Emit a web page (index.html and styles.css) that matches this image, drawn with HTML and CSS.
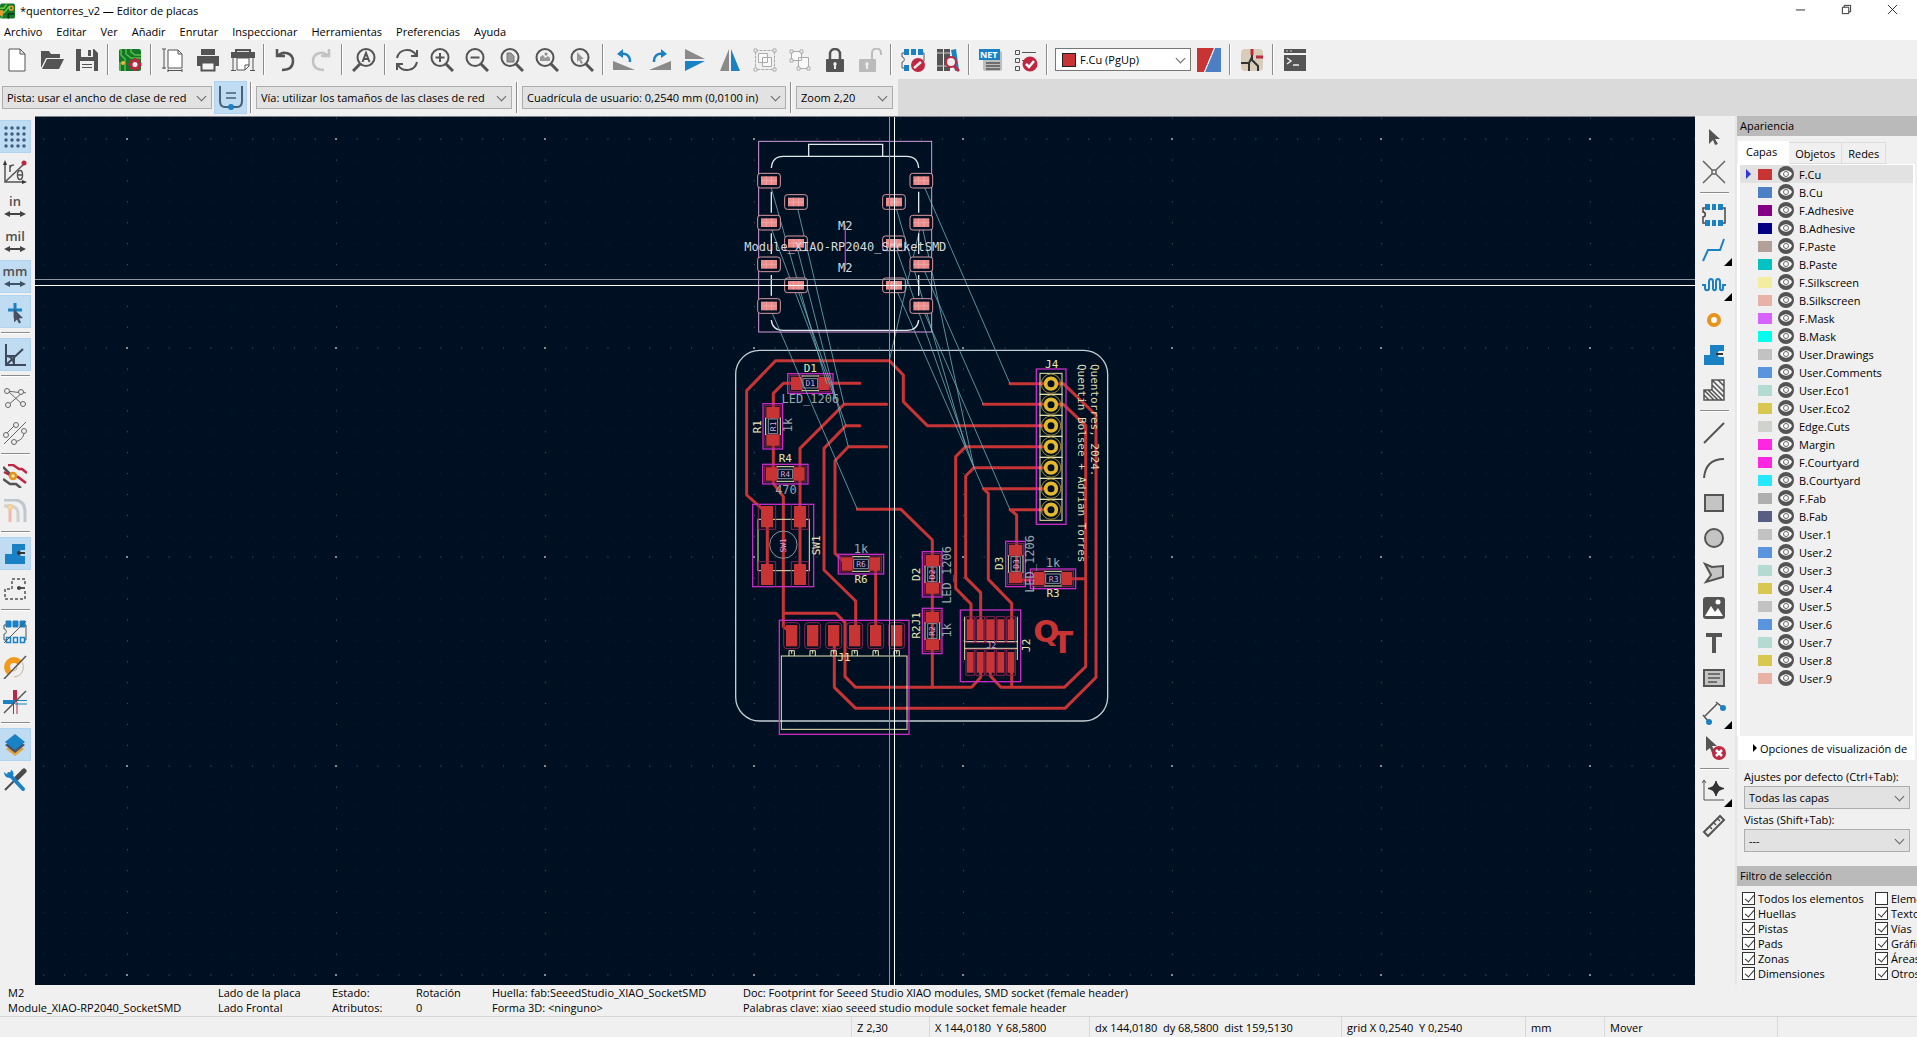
FILE: index.html
```
<!DOCTYPE html>
<html lang="es">
<head>
  <meta charset="UTF-8">
  <title>*quentorres_v2 — Editor de placas</title>
  <link rel="stylesheet" href="styles.css">
</head>
<body>

  <header class="titlebar">
    <svg class="app-icon" viewBox="0 0 16 16"><rect width="16" height="16" rx="2" fill="#17772a"/><path d="M0 5h4l3-4M0 9h5l5-6M2 15V11l3-2" stroke="#6fce3c" stroke-width="1.5" fill="none"/><circle cx="12" cy="5" r="2" fill="none" stroke="#f2a32c" stroke-width="1.5"/><path d="M9 16v-5h6" stroke="#0b3c16" stroke-width="2" fill="none"/><path d="M0 7h3v6H0z" fill="#e79a2c"/></svg>
    <span class="title">*quentorres_v2 — Editor de placas</span>
    <button class="win" aria-label="Minimizar"><svg viewBox="0 0 12 12"><path d="M1 6.500h10"/></svg></button>
    <button class="win" aria-label="Restaurar"><svg viewBox="0 0 12 12"><path d="M1.500 3.500h7v7h-7zM3.500 3.500v-2h7v7h-2"/></svg></button>
    <button class="win" aria-label="Cerrar"><svg viewBox="0 0 12 12"><path d="M1 1l10 10M11 1L1 11"/></svg></button>
  </header>

  <nav class="menubar">
    <button>Archivo</button><button>Editar</button><button>Ver</button><button>Añadir</button><button>Enrutar</button><button>Inspeccionar</button><button>Herramientas</button><button>Preferencias</button><button>Ayuda</button>
  </nav>

  <div class="toolbar">
    <button class="tool" aria-label="Nuevo"><svg viewBox="0 0 24 24"><path d="M4 1h11l5 5v17H4zM15 1v5h5" fill="#fff" stroke="#545454"/></svg></button>
    <button class="tool" aria-label="Abrir"><svg viewBox="0 0 24 24" fill="#545454"><path d="M1 20V3h8l2 3h9v4H6z"/><path d="M7 11h17l-5 10H2z"/></svg></button>
    <button class="tool" aria-label="Guardar"><svg viewBox="0 0 24 24"><path d="M1 1h18l4 4v18H1z" fill="#545454"/><path d="M6 1h12v8H6zM5 13h14v10H5z" fill="#f0f0f0"/><path d="M13 2h3v6h-3zM7 16h10v1H7zM7 19h10v1H7z" fill="#545454"/></svg></button>
    <span class="sep"></span>
    <button class="tool" aria-label="Ajustes de placa"><svg viewBox="0 0 24 24"><rect x="1" y="1" width="22" height="22" rx="2" fill="#14762a"/><path d="M3 1v6l4 4v12M8 1v5l5 4h10M13 1v3l4 3h6M2 14v9" fill="none" stroke="#56bf41" stroke-width="1.500"/><circle cx="5" cy="15" r="2" fill="#f0b23b"/><g stroke="#bf2641" stroke-width="3"><path d="M17 10v13M10.500 16.500h13M12.500 12l9 9M21.500 12l-9 9"/></g><circle cx="17" cy="16.500" r="4.500" fill="#bf2641"/><circle cx="17" cy="16.500" r="2.500" fill="#eee"/></svg></button>
    <span class="sep"></span>
    <button class="tool" aria-label="Ajustes de página"><svg viewBox="0 0 24 24" fill="none" stroke="#545454"><path d="M7 2h10l4 4v14H7zM17 2v4h4" fill="#fff"/><path d="M3 1v20M1 1h4M1 20h4M7 22.500h14M7 21v3M21 21v3"/></svg></button>
    <button class="tool" aria-label="Imprimir"><svg viewBox="0 0 24 24"><path d="M5 1h14v6H5z" fill="#545454"/><path d="M1 8h22v10h-4v-4H5v4H1z" fill="#545454"/><path d="M5.500 14.500h13v8h-13z" fill="#f5f5f5" stroke="#545454" stroke-width="2"/></svg></button>
    <button class="tool" aria-label="Trazar"><svg viewBox="0 0 24 24"><path d="M4 1h16v3h4v6H0V4h4z" fill="#545454"/><path d="M6 10h12v8l-4 4H6z" fill="#fff" stroke="#545454"/><path d="M18 17h-4v5M2 10v13M22 10v13M0 22.500h5M19 22.500h5" fill="none" stroke="#545454"/><path d="M6 3h12v1H6z" fill="#ddd"/></svg></button>
    <span class="sep"></span>
    <button class="tool" aria-label="Deshacer"><svg viewBox="0 0 24 24" fill="none" stroke="#545454" stroke-width="2.500"><path d="M3 1v7h8M4 8c5-6 15-3 15 5 0 6-4 9-11 9"/></svg></button>
    <button class="tool" aria-label="Rehacer"><svg viewBox="0 0 24 24" fill="none" stroke="#c3c3c3" stroke-width="2.500"><path d="M20 1v7h-8M19 8C14 2 4 5 4 13c0 6 4 9 11 9"/></svg></button>
    <span class="sep"></span>
    <button class="tool" aria-label="Buscar"><svg viewBox="0 0 24 24" fill="none" stroke="#545454" stroke-width="2"><circle cx="14" cy="9.500" r="8.500"/><path d="M8 16l-7 7" stroke-width="3"/><path d="M10.500 14l3.500-9 3.500 9M12 11h4"/></svg></button>
    <span class="sep"></span>
    <button class="tool" aria-label="Refrescar"><svg viewBox="0 0 24 24" fill="none" stroke="#545454" stroke-width="2"><path d="M2 10C4 1 16-1 21 7M22 14c-2 9-14 11-19 3"/><path d="M22 2v6h-6M2 22v-6h6"/></svg></button>
    <button class="tool" aria-label="Acercar"><svg viewBox="0 0 24 24" fill="none" stroke="#545454" stroke-width="2"><circle cx="10" cy="9.500" r="8.500"/><path d="M16 16l7 7" stroke-width="3"/><path d="M10 5v9M5.500 9.500h9"/></svg></button>
    <button class="tool" aria-label="Alejar"><svg viewBox="0 0 24 24" fill="none" stroke="#545454" stroke-width="2"><circle cx="10" cy="9.500" r="8.500"/><path d="M16 16l7 7" stroke-width="3"/><path d="M5.500 9.500h9"/></svg></button>
    <button class="tool" aria-label="Ajustar a página"><svg viewBox="0 0 24 24" fill="none" stroke="#545454" stroke-width="2"><circle cx="10" cy="9.500" r="8.500"/><path d="M16 16l7 7" stroke-width="3"/><path d="M7 5h4l3 3v6H7z" fill="#999" stroke="#777" stroke-width="1"/></svg></button>
    <button class="tool" aria-label="Ajustar a objetos"><svg viewBox="0 0 24 24" fill="none" stroke="#545454" stroke-width="2"><circle cx="10" cy="9.500" r="8.500"/><path d="M16 16l7 7" stroke-width="3"/><path d="M5 13V9l3-2 2 3 3-2 2 2v3z" fill="#999" stroke="none"/><circle cx="11" cy="6" r="1.500" fill="#888" stroke="none"/></svg></button>
    <button class="tool" aria-label="Ampliar selección"><svg viewBox="0 0 24 24" fill="none" stroke="#545454" stroke-width="2"><circle cx="10" cy="9.500" r="8.500"/><path d="M16 16l7 7" stroke-width="3"/><path d="M7 4l7 7h-3l2 4-2 1-2-4-2 2z" fill="#999" stroke="none"/></svg></button>
    <span class="sep"></span>
    <button class="tool" aria-label="Girar a la izquierda"><svg viewBox="0 0 24 24"><path d="M0 13v9h22z" fill="#8a8a8a"/><path d="M8 6c6-1 9 2 9 8" fill="none" stroke="#1a81c4" stroke-width="2.500"/><path d="M4 6l6-5v9z" fill="#1a81c4"/></svg></button>
    <button class="tool" aria-label="Girar a la derecha"><svg viewBox="0 0 24 24"><path d="M23 13v9H1z" fill="#8a8a8a"/><path d="M15 6C9 5 6 8 6 14" fill="none" stroke="#1a81c4" stroke-width="2.500"/><path d="M19 6l-6-5v9z" fill="#1a81c4"/></svg></button>
    <button class="tool" aria-label="Reflejar verticalmente"><svg viewBox="0 0 24 24"><path d="M2 1v10h20z" fill="#8a8a8a"/><path d="M2 23V13h20z" fill="#1a81c4"/></svg></button>
    <button class="tool" aria-label="Reflejar horizontalmente"><svg viewBox="0 0 24 24"><path d="M2 23h9V1z" fill="#8a8a8a"/><path d="M22 23h-9V1z" fill="#1a81c4"/></svg></button>
    <button class="tool" aria-label="Agrupar"><svg viewBox="0 0 24 24" fill="#fafafa" stroke="#aaa"><path d="M2.500 2.500h19v19h-19z" fill="none" stroke-dasharray="3 1"/><path d="M5.500 5.500h9v9h-9zM9.500 9.500h9v9h-9z"/><path d="M1 1h3v3H1zM20 1h3v3h-3zM1 20h3v3H1zM20 20h3v3h-3z"/></svg></button>
    <button class="tool" aria-label="Desagrupar"><svg viewBox="0 0 24 24" fill="#fafafa" stroke="#aaa"><path d="M3.500 3.500h10v9h-10zM10.500 9.500h10v11h-10z"/><path d="M2 2h3v3H2zM12 2h3v3h-3zM2 11h3v3H2zM9 19h3v3H9zM19 19h3v3h-3z"/></svg></button>
    <button class="tool" aria-label="Bloquear"><svg viewBox="0 0 24 24"><path d="M7 12V6a5 5 0 0 1 10 0v6" fill="none" stroke="#545454" stroke-width="2.500"/><rect x="3" y="11" width="18" height="13" rx="1" fill="#545454"/><path d="M12 14a2 2 0 0 1 1 3.500V21h-2v-3.500A2 2 0 0 1 12 14z" fill="#eee"/></svg></button>
    <button class="tool" aria-label="Desbloquear"><svg viewBox="0 0 24 24"><path d="M14 12V5a4 4 0 0 1 9 0v2" fill="none" stroke="#bbb" stroke-width="2"/><rect x="1" y="11" width="17" height="13" rx="1" fill="#bbb"/><path d="M9 14a2 2 0 0 1 1 3.500V21H8v-3.500A2 2 0 0 1 9 14z" fill="#eee"/></svg></button>
    <span class="sep"></span>
    <button class="tool" aria-label="Editor de huellas"><svg viewBox="0 0 24 24"><path d="M3 5H1v4c3 0 3 5 0 5v6h3M21 5h2v8" fill="none" stroke="#545454"/><path d="M3 1h5v6H3zM10 1h5v6h-5zM17 1h5v6h-5zM3 17h5v6H3z" fill="#1a81c4"/><circle cx="17" cy="17" r="7" fill="#bf2641"/><path d="M13 20l7-6" stroke="#eee" stroke-width="2.500"/></svg></button>
    <button class="tool" aria-label="Bibliotecas de huellas"><svg viewBox="0 0 24 24"><path d="M1 1h6v22H1zM8 1h6v22H8z" fill="#545454"/><path d="M15 2l5-1 3 21-4 1z" fill="#1a81c4"/><path d="M1 5h13M1 18h13" stroke="#ccc"/><circle cx="15" cy="14" r="5" fill="#eee" stroke="#bf2641" stroke-width="2"/><path d="M18 18l5 5" stroke="#bf2641" stroke-width="3"/></svg></button>
    <span class="sep"></span>
    <button class="tool" aria-label="Actualizar placa desde esquema"><svg viewBox="0 0 24 24"><rect x="4" y="3" width="19" height="20" rx="2" fill="#bdbdbd"/><rect x="0" y="1" width="21" height="11" fill="#1a81c4"/><text x="1" y="10" class="net">NET</text><path d="M7 15h14M7 18h14M7 21h14" stroke="#545454" stroke-width="1.500"/></svg></button>
    <button class="tool" aria-label="Comprobar reglas"><svg viewBox="0 0 24 24" fill="none" stroke="#545454"><path d="M1.500 2.500h4v4h-4zM1.500 10.500h4v4h-4zM1.500 18.500h4v4h-4zM8 4.500h14M8 12.500h4"/><circle cx="16" cy="16" r="7.500" fill="#bf2641" stroke="none"/><path d="M12 16l3 3 5-6" stroke="#fff" stroke-width="2.500"/></svg></button>
    <span class="sep"></span>
    <label class="combo layer-combo"><i class="swatch"></i><select aria-label="Capa activa"><option>F.Cu (PgUp)</option></select></label>
    <button class="tool" aria-label="Par de capas"><svg viewBox="0 0 24 24"><path d="M0 0h17L7 24H0z" fill="#c83434"/><path d="M18 0h6v24H8z" fill="#4d7fc4"/><path d="M17.500 0l-10 24" stroke="#fff"/></svg></button>
    <span class="sep"></span>
    <button class="tool" aria-label="Modo de contraste"><svg viewBox="0 0 24 24"><rect x="1" y="1" width="22" height="22" rx="4" fill="#d8cdb8"/><path d="M1 15h8v8M9 15l3-6M12 1v11l6 6v5M18 9h5" fill="none" stroke="#333" stroke-width="2"/><path d="M12 1v6M16 9h7" stroke="#bf2641" stroke-width="3"/></svg></button>
    <span class="sep"></span>
    <button class="tool" aria-label="Consola"><svg viewBox="0 0 24 24"><path d="M1 1h22v4H1zM1 7h22v16H1z" fill="#545454"/><path d="M4 10l4 3-4 3M10 17h6" fill="none" stroke="#eee" stroke-width="1.500"/><path d="M3 3h2M7 3h2" stroke="#ccc"/></svg></button>
  </div>

  <div class="optionbar">
    <div class="options">
      <label class="combo track-width"><select aria-label="Pista"><option>Pista: usar el ancho de clase de red</option></select></label>
      <button class="tool on" aria-label="Ancho automático"><svg viewBox="0 0 24 24" fill="none" stroke="#48607a" stroke-width="2"><path d="M1 0v15c0 4 2 6 5 6h12c3 0 5-2 5-6V0"/><path d="M7 7h10M7 12h10" stroke-width="1.500"/><circle cx="12" cy="21" r="3" fill="#1a81c4" stroke="none"/></svg></button>
      <span class="sep"></span>
      <label class="combo via"><select aria-label="Vía"><option>Vía: utilizar los tamaños de las clases de red</option></select></label>
      <span class="sep"></span>
      <label class="combo grid"><select aria-label="Cuadrícula"><option>Cuadrícula de usuario: 0,2540 mm (0,0100 in)</option></select></label>
      <span class="sep"></span>
      <label class="combo zoom"><select aria-label="Zoom"><option>Zoom 2,20</option></select></label>
    </div>
  </div>

  <main>
    <div class="sidebar left">
      <button class="tool on" aria-label="Mostrar cuadrícula"><svg viewBox="0 0 24 24"><path d="M3 3h19M3 9h19M3 15h19M3 21h19" stroke="#3f5f82" stroke-width="3.500" stroke-linecap="round" stroke-dasharray="0 6"/></svg></button>
      <button class="tool" aria-label="Coordenadas polares"><svg viewBox="0 0 24 24" fill="none" stroke="#545454" stroke-width="1.500"><path d="M2 4v18h18"/><path d="M2 22L21 4"/><path d="M0 5l2-5 2 5zM19 20l5 2-5 2z" fill="#333" stroke="none"/><circle cx="21" cy="3" r="2.500" fill="#bf2641" stroke="none"/><path d="M7 12V5M7 8c1-3 2-3 4-3"/><ellipse cx="17" cy="15" rx="2.500" ry="4.500"/><path d="M15 15h4"/></svg></button>
      <button class="tool" aria-label="Pulgadas"><svg viewBox="0 0 24 24"><text x="12" y="11" class="unit">in</text><path d="M4 19h16" stroke="#444" stroke-width="2"/><path d="M1 19l6-3v6zM23 19l-6-3v6z" fill="#444"/></svg></button>
      <button class="tool" aria-label="Milésimas"><svg viewBox="0 0 24 24"><text x="12" y="11" class="unit">mil</text><path d="M4 19h16" stroke="#444" stroke-width="2"/><path d="M1 19l6-3v6zM23 19l-6-3v6z" fill="#444"/></svg></button>
      <button class="tool on" aria-label="Milímetros"><svg viewBox="0 0 24 24"><text x="12" y="11" class="unit">mm</text><path d="M4 19h16" stroke="#3c5068" stroke-width="2"/><path d="M1 19l6-3v6zM23 19l-6-3v6z" fill="#3c5068"/></svg></button>
      <button class="tool on" aria-label="Cursor completo"><svg viewBox="0 0 24 24"><path d="M12 3v15M5 10h14" stroke="#1a81c4" stroke-width="3"/><path d="M11 9l9 9-4 .5 2 4-2 1-2-4-3 3z" fill="#485060"/></svg></button>
      <span class="sep"></span>
      <button class="tool on" aria-label="Modo de 45 grados"><svg viewBox="0 0 24 24" fill="none" stroke="#3c4a5c" stroke-width="2"><path d="M3 1v21h20M3 22L20 6M3 13c5 0 8 4 8 9M3 13h8v9"/></svg></button>
      <span class="sep"></span>
      <button class="tool" aria-label="Mostrar conexiones"><svg viewBox="0 0 24 24" fill="#f0f0f0" stroke="#666"><path d="M4 5l16 2M4 20L19 7M5 5l15 14M19 6l4 1"/><circle cx="4" cy="5" r="2.500"/><circle cx="18" cy="6" r="2.500"/><circle cx="5" cy="19" r="2.500"/><circle cx="20" cy="18" r="2.500"/></svg></button>
      <button class="tool" aria-label="Conexiones curvas"><svg viewBox="0 0 24 24" fill="none" stroke="#666"><path d="M1 23L23 1M3 13l9-9M11 21c6-1 10-4 10-10"/><g fill="#f0f0f0"><circle cx="3" cy="14" r="2.500"/><circle cx="13" cy="4" r="2.500"/><circle cx="11" cy="21" r="2.500"/><circle cx="21" cy="10" r="2.500"/></g></svg></button>
      <span class="sep"></span>
      <button class="tool" aria-label="Resaltar redes"><svg viewBox="0 0 24 24" fill="none" stroke-width="2.500"><path d="M5 1h5l6 4h3l5 4M1 8l8 4 6 1 8 6" stroke="#bf2641"/><path d="M0 3l9 9M0 15l7 5h6l5 4" stroke="#545454"/><circle cx="10" cy="12" r="3" fill="#fbe3b0" stroke="#e29218"/></svg></button>
      <button class="tool" aria-label="Capas inactivas"><svg viewBox="0 0 24 24" fill="none" stroke-width="3"><path d="M1 1h10c8 0 11 5 11 12v10" stroke="#bcc7cf"/><path d="M1 7h6c6 0 8 4 8 8v8" stroke="#cfd0d0"/><path d="M7 10v13" stroke="#f3b9a8"/><circle cx="7" cy="8" r="2.500" fill="#f9d9a0" stroke="#f3c388" stroke-width="1"/></svg></button>
      <span class="sep"></span>
      <button class="tool on" aria-label="Zonas rellenas"><svg viewBox="0 0 24 24"><path d="M9 2h13v6h-4a4 4 0 0 0 0 6h4v8H2V12h7z" fill="#1a81c4"/><path d="M15 11h7" stroke="#333" stroke-width="2"/><circle cx="16" cy="11" r="2" fill="#333"/></svg></button>
      <button class="tool" aria-label="Contorno de zonas"><svg viewBox="0 0 24 24" fill="none" stroke="#545454" stroke-width="1.500"><path d="M9 2h13v6M22 14v8H2V12h7V2" stroke-dasharray="3 2"/><path d="M14 11h8" stroke-width="2"/><circle cx="16" cy="11" r="2" fill="#444" stroke="none"/></svg></button>
      <span class="sep"></span>
      <button class="tool" aria-label="Pads en contorno"><svg viewBox="0 0 24 24" fill="none" stroke="#1a81c4"><path d="M3 5H1v4c3 0 3 5 0 5v6h2M22 5h1v15h-1" stroke="#545454"/><path d="M3 1h5v6H3zM10 1h5v6h-5zM17 1h5v6h-5z" fill="#1a81c4"/><path d="M3.500 17.500h4v5h-4zM10.500 17.500h4v5h-4zM17.500 17.500h4v5h-4z" stroke-width="1.500"/><path d="M1 23L23 1" stroke="#545454"/></svg></button>
      <button class="tool" aria-label="Vías en contorno"><svg viewBox="0 0 24 24" fill="none"><circle cx="11" cy="12" r="7" stroke="#f29b1d" stroke-width="6"/><path d="M3 21L22 3c3 8-2 19-12 19z" fill="#f0f0f0"/><path d="M19 7c3 5 1 14-8 15M14 12a4 4 0 0 1-4 4" stroke="#c6b89d"/><path d="M1 24L23 1" stroke="#545454" stroke-width="1.500"/></svg></button>
      <button class="tool" aria-label="Pistas en contorno"><svg viewBox="0 0 24 24" fill="none"><path d="M12 0v12" stroke="#bf2641" stroke-width="4"/><path d="M0 12h12" stroke="#1a81c4" stroke-width="4"/><path d="M10.500 12v12M14 12v12" stroke="#bf2641"/><path d="M12 10.500h12M12 14h12" stroke="#1a81c4"/><path d="M1 23L23 1" stroke="#545454" stroke-width="1.500"/></svg></button>
      <span class="sep"></span>
      <button class="tool on" aria-label="Panel de apariencia"><svg viewBox="0 0 24 24"><path d="M3 16l9 7 9-7-9-6z" fill="#e8a23a"/><path d="M2 12l10 8 10-8-10-6z" fill="#44536a"/><path d="M2 9l10 8 10-8-10-8z" fill="#1a81c4"/></svg></button>
      <button class="tool" aria-label="Panel de propiedades"><svg viewBox="0 0 24 24" fill="none"><path d="M2 22L20 4" stroke="#4a4a4a" stroke-width="2"/><path d="M14 10l7-7" stroke="#4a4a4a" stroke-width="5" stroke-linecap="round"/><path d="M6 6l14 15" stroke="#1a81c4" stroke-width="4" stroke-linecap="round"/><path d="M1 4l5 4 2-6c3 1 4 7-1 8-4 0-6-3-6-6z" fill="#1a81c4"/></svg></button>
    </div>

    <div class="canvas">
      <svg viewBox="35 117 1660 868" preserveAspectRatio="xMidYMid slice">
        <defs>
          <pattern id="minor" x="33.200" y="128.700" width="20.900" height="20.900" patternUnits="userSpaceOnUse"><rect x="10" y="10" width="1" height="1" fill="#14263a"/></pattern>
          <pattern id="row" x="33.200" y="34.500" width="20.900" height="209" patternUnits="userSpaceOnUse"><rect x="10" y="104" width="1" height="1" fill="#44525f"/></pattern>
          <pattern id="col" x="23" y="128.700" width="209" height="20.900" patternUnits="userSpaceOnUse"><rect x="104" y="10" width="1" height="1" fill="#44525f"/></pattern>
          <pattern id="major" x="23" y="34" width="209" height="209" patternUnits="userSpaceOnUse"><rect x="103" y="104" width="2" height="2" fill="#7f8b95"/></pattern>

          <!-- 1206 chip, centred on its origin -->
          <g id="chip">
            <rect x="-68" y="-29" width="136" height="59" class="courtyard"/>
            <path d="M-62 -24h38v48h-38zM24 -24h38v48h-38z" class="mask"/>
            <path d="M-58 -20h33v40h-33zM25 -20h33v40h-33z" class="pad"/>
            <path d="M-26 -22h52M-26 22h52" class="silk"/>
            <path d="M-22 -14h44v28h-44z" class="fab"/>
          </g>
          <g id="socket-pad">
            <rect x="-34" y="-22" width="68" height="44" rx="8" class="paste"/>
            <path d="M-24 -13h48v26h-48z" fill="#e98b8b"/>
            <path d="M-24 0h48M-8 -13v26M8 -13v26" stroke="#f3b1ad" stroke-width="2"/>
          </g>
          <g id="hole">
            <rect x="-33" y="-31" width="66" height="63" class="silk"/>
            <circle r="29" fill="none" stroke="#a38a2c" stroke-width="3"/>
            <circle r="16" fill="#001023" stroke="#e3b72e" stroke-width="11"/>
          </g>
          <g id="conn-pad">
            <rect x="-24" y="-38" width="48" height="78" rx="10" class="mask"/>
            <rect x="-17" y="-31" width="34" height="64" class="pad"/>
            <path d="M-8 62V46h16v16M0 46v9" class="silk"/>
          </g>
        </defs>

        <rect x="35" y="117" width="1660" height="868" fill="#001023"/>
        <rect x="35" y="117" width="1660" height="868" fill="url(#minor)"/>
        <rect x="35" y="117" width="1660" height="868" fill="url(#row)"/>
        <rect x="35" y="117" width="1660" height="868" fill="url(#col)"/>
        <rect x="35" y="117" width="1660" height="868" fill="url(#major)"/>

        <g transform="translate(720 340) scale(.33333)">
          <rect x="47" y="31" width="1116" height="1112" rx="72" class="edge"/>

          <!-- copper tracks -->
          <g class="copper">
            <path d="M125 505L80 465V152L167 62H508L550 105V185L622 257H993"/>
            <path d="M215 130H190L160 160V210M330 130H420M500 193H372L240 325V710"/>
            <path d="M420 257H378L312 325V690L407 783V880M500 320H385L345 362V640L375 668"/>
            <path d="M160 300V430L190 470V860L215 880M142 520V710M467 680V880"/>
            <path d="M190 820H348L375 848V1010L407 1042H755L782 1012V970"/>
            <path d="M343 890V1042L407 1105H1035L1128 1012V225L1030 131H870"/>
            <path d="M790 193H1030L1097 257V980L1033 1042H843L811 1008V970M875 1042V970M1050 716H1097"/>
            <path d="M412 508H543L637 600V1042"/>
            <path d="M993 320H737L707 350V745L753 792V850M993 383H762L737 408V713L782 758V850"/>
            <path d="M993 446H790L805 460V718L875 790V850M993 509H870L890 525V720H950"/>
          </g>

          <!-- parts -->
          <use href="#chip" transform="translate(271 130)"/>
          <use href="#chip" transform="translate(159 259) rotate(90)"/>
          <use href="#chip" transform="translate(196 402)"/>
          <use href="#chip" transform="translate(423 672)"/>
          <use href="#chip" transform="translate(637 703) rotate(90)"/>
          <use href="#chip" transform="translate(637 873) rotate(90)"/>
          <use href="#chip" transform="translate(887 672) rotate(90)"/>
          <use href="#chip" transform="translate(999 716)"/>

          <rect x="98" y="493" width="183" height="247" class="courtyard"/>
          <rect x="114" y="538" width="154" height="154" class="silk"/>
          <circle cx="190" cy="614" r="41" class="fab"/>
          <path d="M123 498h36v64h-36zM222 498h36v64h-36zM123 672h36v63h-36zM222 672h36v63h-36z" class="pad"/>
          <path d="M115 493v75h52v-75M214 493v75h52v-75M115 740v-75h52v75M214 740v-75h52v75" class="mask"/>

          <rect x="178" y="841" width="389" height="342" class="courtyard"/>
          <rect x="184" y="948" width="377" height="220" class="silk"/>
          <use href="#conn-pad" x="215" y="886"/><use href="#conn-pad" x="278" y="886"/><use href="#conn-pad" x="341" y="886"/>
          <use href="#conn-pad" x="404" y="886"/><use href="#conn-pad" x="467" y="886"/><use href="#conn-pad" x="530" y="886"/>

          <rect x="721" y="810" width="181" height="215" class="courtyard"/>
          <path d="M734 830V960M892 830V960M734 905H892M734 925H892" class="silk"/>
          <path d="M738 830h26v78h-26zM768 830h26v78h-26zM798 830h26v78h-26zM829 830h26v78h-26zM860 830h26v78h-26zM738 928h26v78h-26zM768 928h26v78h-26zM798 928h26v78h-26zM829 928h26v78h-26zM860 928h26v78h-26z" class="mask"/>
          <path d="M741 838h20v62h-20zM771 838h20v62h-20zM799 838h24v62h-24zM832 838h20v62h-20zM863 838h20v62h-20zM741 936h20v62h-20zM771 936h20v62h-20zM799 936h24v62h-24zM832 936h20v62h-20zM863 936h20v62h-20z" class="pad"/>

          <rect x="949" y="87" width="89" height="466" class="courtyard"/>
          <use href="#hole" x="993" y="131"/><use href="#hole" x="993" y="194"/><use href="#hole" x="993" y="257"/><use href="#hole" x="993" y="320"/>
          <use href="#hole" x="993" y="383"/><use href="#hole" x="993" y="446"/><use href="#hole" x="993" y="509"/>

          <!-- references and values -->
          <g class="ref">
            <text x="271" y="97">D1</text>
            <text transform="translate(122 260) rotate(-90)">R1</text>
            <text x="196" y="367">R4</text>
            <text transform="translate(300 616) rotate(-90)">SW1</text>
            <text x="423" y="730">R6</text>
            <text transform="translate(600 703) rotate(-90)">D2</text>
            <text transform="translate(600 856) rotate(-90)">R2J1</text>
            <text transform="translate(850 670) rotate(-90)">D3</text>
            <text x="999" y="772">R3</text>
            <text transform="translate(930 916) rotate(-90)">J2</text>
            <text x="995" y="85">J4</text>
            <text x="372" y="962">J1</text>
          </g>
          <g class="value">
            <text x="271" y="190">LED_1206</text>
            <text transform="translate(217 255) rotate(-90)">1k</text>
            <text x="198" y="461">470</text>
            <text x="423" y="638">1k</text>
            <text transform="translate(693 705) rotate(-90)">LED_1206</text>
            <text transform="translate(693 871) rotate(-90)">1k</text>
            <text transform="translate(942 672) rotate(-90)">LED_1206</text>
            <text x="999" y="681">1k</text>
          </g>
          <g class="fabref">
            <text x="271" y="139">D1</text><text x="196" y="411">R4</text><text x="423" y="681">R6</text><text x="1001" y="725">R3</text><text x="814" y="924">J2</text>
            <text transform="translate(168 259) rotate(-90)">R1</text><text transform="translate(646 703) rotate(-90)">D2</text><text transform="translate(646 873) rotate(-90)">R2</text><text transform="translate(896 672) rotate(-90)">D3</text><text transform="translate(199 616) rotate(-90)">SW1</text>
          </g>
          <g class="credits">
            <text transform="translate(1112 72) rotate(90)">Quentorres, 2024.</text>
            <text transform="translate(1073 72) rotate(90)">Quentin Bolsee + Adrian Torres</text>
          </g>
          <text x="940" y="905" class="logo">Q</text>
          <text x="997" y="940" class="logo">T</text>

          <!-- ratsnest -->
          <path class="rats" d="M147 -480L320 131M147 -353L345 175M228 -415L372 193M228 -290L385 320M228 -165L378 257M147 -103L412 508M604 -480L870 131M523 -415L737 320M523 -290L762 383M523 -165L790 446M604 -353L762 383M604 -228L790 193M604 -103L870 509M604 -353L508 62"/>
        </g>

        <!-- XIAO module being moved -->
        <g transform="translate(730 110) scale(.33333)">
          <rect x="86" y="94" width="519" height="572" fill="none" stroke="#d59bdc" stroke-width="3"/>
          <path d="M236 139V103H458V139M124 174C126 150 138 139 160 139H530C552 139 564 150 566 174M124 245V308M124 370V432M124 495V557M566 245V308M566 370V432M566 495V557M124 630C126 650 138 661 160 661H530C552 661 564 650 566 630" fill="none" stroke="#dfe8ea" stroke-width="4"/>
          <path d="M346 345V480" stroke="#d02bd0" stroke-width="4"/>
          <use href="#socket-pad" x="117" y="212"/><use href="#socket-pad" x="117" y="338"/><use href="#socket-pad" x="117" y="463"/><use href="#socket-pad" x="117" y="588"/>
          <use href="#socket-pad" x="198" y="276"/><use href="#socket-pad" x="198" y="400"/><use href="#socket-pad" x="198" y="526"/>
          <use href="#socket-pad" x="492" y="276"/><use href="#socket-pad" x="492" y="400"/><use href="#socket-pad" x="492" y="526"/>
          <use href="#socket-pad" x="574" y="212"/><use href="#socket-pad" x="574" y="338"/><use href="#socket-pad" x="574" y="463"/><use href="#socket-pad" x="574" y="588"/>
          <g class="module-text">
            <text x="346" y="360">M2</text>
            <text x="346" y="424">Module_XIAO-RP2040_SocketSMD</text>
            <text x="346" y="486">M2</text>
          </g>
        </g>

        <!-- full-window cursor -->
        <path d="M889.500 117V985M35 279.500H1695" stroke="#8d969e" fill="none"/>
        <path d="M894.500 117V985M35 285.500H1695" stroke="#fff" fill="none"/>
      </svg>
    </div>

    <div class="sidebar right">
      <button class="tool" aria-label="Seleccionar"><svg viewBox="0 0 24 24"><path d="M7 4l11 10h-5l3 5-3 1-2-5-4 4z" fill="#545454"/></svg></button>
      <button class="tool" aria-label="Resaltar red"><svg viewBox="0 0 24 24" fill="none" stroke="#666" stroke-width="1.500"><path d="M1 1l9 9M23 1l-9 9M1 23l9-9M23 23l-9-9M10 10h4v4h-4z"/></svg></button>
      <span class="sep"></span>
      <button class="tool" aria-label="Añadir huella"><svg viewBox="0 0 24 24"><path d="M3 5H1v4c3 0 3 5 0 5v6h2M21 5h2v15h-2" fill="none" stroke="#444" stroke-width="1.500"/><path d="M3 1h5v6H3zM10 1h4v6h-4zM16 1h5v6h-5zM3 17h5v6H3zM10 17h4v6h-4zM16 17h5v6h-5z" fill="#1a81c4"/></svg></button>
      <button class="tool more" aria-label="Enrutar pista"><svg viewBox="0 0 24 24"><path d="M1 23l5-11h12l4-11" fill="none" stroke="#1a81c4" stroke-width="2"/></svg></button>
      <button class="tool more" aria-label="Ajustar longitud"><svg viewBox="0 0 24 24" fill="none" stroke="#1a81c4" stroke-width="2"><path d="M0 12h3v3c0 3 4 3 4 0V9c0-4 4-4 4 0v6c0 3 3 3 3 0V9c0-4 4-4 4 0v6c0 3 3 3 3 0v-3h3"/></svg></button>
      <button class="tool" aria-label="Añadir vía"><svg viewBox="0 0 24 24"><circle cx="12" cy="12" r="5" fill="#fff" stroke="#e8931a" stroke-width="4"/></svg></button>
      <button class="tool" aria-label="Añadir zona"><svg viewBox="0 0 24 24"><path d="M8 2h14v6h-5a4 4 0 0 0 0 6h5v8H2V12h6z" fill="#1a81c4"/><path d="M14 11h7" stroke="#333" stroke-width="2"/></svg></button>
      <button class="tool" aria-label="Área de reglas"><svg viewBox="0 0 24 24" fill="none" stroke="#545454" stroke-width="1.500"><path d="M10 2h12v20H2V12h8zM10 2l12 12M10 7l12 12M10 12l10 10M6 12l10 10M2 12l10 10M2 17l5 5M16 2l6 6"/></svg></button>
      <span class="sep"></span>
      <button class="tool" aria-label="Dibujar línea"><svg viewBox="0 0 24 24"><path d="M2 22L22 2" stroke="#545454" stroke-width="2"/></svg></button>
      <button class="tool" aria-label="Dibujar arco"><svg viewBox="0 0 24 24"><path d="M2 22C3 10 9 3 22 3" fill="none" stroke="#545454" stroke-width="2"/></svg></button>
      <button class="tool" aria-label="Dibujar rectángulo"><svg viewBox="0 0 24 24"><path d="M3 4h18v16H3z" fill="#c4c4c4" stroke="#545454" stroke-width="2"/></svg></button>
      <button class="tool" aria-label="Dibujar círculo"><svg viewBox="0 0 24 24"><circle cx="12" cy="12" r="9" fill="#c4c4c4" stroke="#545454" stroke-width="2"/></svg></button>
      <button class="tool" aria-label="Dibujar polígono"><svg viewBox="0 0 24 24"><path d="M3 3l7 3 11-1v11L4 21l5-7z" fill="#c4c4c4" stroke="#545454" stroke-width="2"/></svg></button>
      <button class="tool" aria-label="Añadir imagen"><svg viewBox="0 0 24 24"><rect x="1" y="1" width="22" height="22" rx="3" fill="#545454"/><path d="M3 20l6-10 4 6 3-4 5 8z" fill="#fff"/><circle cx="16" cy="6" r="2.500" fill="#fff"/></svg></button>
      <button class="tool" aria-label="Añadir texto"><svg viewBox="0 0 24 24"><path d="M4 2h16v4h-6v16h-4V6H4z" fill="#545454"/></svg></button>
      <button class="tool" aria-label="Añadir cuadro de texto"><svg viewBox="0 0 24 24"><path d="M2 4h20v16H2z" fill="#c4c4c4" stroke="#545454" stroke-width="2"/><path d="M6 8h12M6 12h12M6 16h9" stroke="#545454" stroke-width="1.500"/></svg></button>
      <button class="tool more" aria-label="Añadir cota"><svg viewBox="0 0 24 24"><path d="M1 14l5 6M14 1l6 5M3 15L15 3" fill="none" stroke="#545454" stroke-width="1.500"/><circle cx="7" cy="21" r="3" fill="#1a81c4"/><circle cx="21" cy="7" r="3" fill="#1a81c4"/></svg></button>
      <button class="tool" aria-label="Borrar"><svg viewBox="0 0 24 24"><path d="M4 0l11 10h-5l3 6-3 1-2-5-4 3z" fill="#545454"/><circle cx="17" cy="17" r="7" fill="#bf2641"/><path d="M14 14l6 6M20 14l-6 6" stroke="#fff" stroke-width="2.500"/></svg></button>
      <span class="sep"></span>
      <button class="tool more" aria-label="Origen de cuadrícula"><svg viewBox="0 0 24 24"><path d="M2 1v20h20M0 4l2-3 2 3" fill="none" stroke="#545454"/><path d="M14 2v15M6 9.500h16" stroke="#333" stroke-width="1.500"/><path d="M14 2l3 5 5 2.500-5 2.500-3 5-3-5-5-2.500L11 7z" fill="#333"/></svg></button>
      <button class="tool" aria-label="Medir"><svg viewBox="0 0 24 24" fill="#eee" stroke="#545454" stroke-width="2"><path d="M2 18L18 2l4 4L6 22z"/><path d="M8 13l2 2M12 9l2 2M16 5l2 2" stroke-width="1.500"/></svg></button>
    </div>

    <aside class="panel">
      <h2>Apariencia</h2>
      <div class="tabs">
        <button class="active">Capas</button><button>Objetos</button><button>Redes</button>
      </div>
      <div class="layers" id="layers"></div>
      <div class="display-options"><i></i>Opciones de visualización de</div>
      <div class="presets">
        <label for="preset">Ajustes por defecto (Ctrl+Tab):</label>
        <div class="combo"><select id="preset"><option>Todas las capas</option></select></div>
        <label for="viewport">Vistas (Shift+Tab):</label>
        <div class="combo"><select id="viewport"><option>---</option></select></div>
      </div>
      <h2>Filtro de selección</h2>
      <div class="filter">
        <label><input type="checkbox" checked>Todos los elementos</label><label><input type="checkbox">Elementos bloqueados</label>
        <label><input type="checkbox" checked>Huellas</label><label><input type="checkbox" checked>Textos</label>
        <label><input type="checkbox" checked>Pistas</label><label><input type="checkbox" checked>Vías</label>
        <label><input type="checkbox" checked>Pads</label><label><input type="checkbox" checked>Gráficos</label>
        <label><input type="checkbox" checked>Zonas</label><label><input type="checkbox" checked>Áreas de reglas</label>
        <label><input type="checkbox" checked>Dimensiones</label><label><input type="checkbox" checked>Otros elementos</label>
      </div>
    </aside>
  </main>

  <div class="messages">
    <p>M2<br>Module_XIAO-RP2040_SocketSMD</p>
    <p>Lado de la placa<br>Lado Frontal</p>
    <p>Estado:<br>Atributos:</p>
    <p>Rotación<br>0</p>
    <p>Huella: fab:SeeedStudio_XIAO_SocketSMD<br>Forma 3D: &lt;ninguno&gt;</p>
    <p>Doc: Footprint for Seeed Studio XIAO modules, SMD socket (female header)<br>Palabras clave: xiao seeed studio module socket female header</p>
  </div>

  <footer class="status">
    <span></span>
    <span>Z 2,30</span>
    <span>X 144,0180&nbsp; Y 68,5800</span>
    <span>dx 144,0180&nbsp; dy 68,5800&nbsp; dist 159,5130</span>
    <span>grid X 0,2540&nbsp; Y 0,2540</span>
    <span>mm</span>
    <span>Mover</span>
    <span></span>
  </footer>

  <script>
    const layers = [
      ['F.Cu', '#c83434'], ['B.Cu', '#4d7fc4'], ['F.Adhesive', '#840084'], ['B.Adhesive', '#000084'],
      ['F.Paste', '#b4a09a'], ['B.Paste', '#00c2c2'], ['F.Silkscreen', '#f2eda1'], ['B.Silkscreen', '#e8b2a7'],
      ['F.Mask', '#d864ff'], ['B.Mask', '#02ffee'], ['User.Drawings', '#c2c2c2'], ['User.Comments', '#5994dc'],
      ['User.Eco1', '#b4dbd2'], ['User.Eco2', '#d8c852'], ['Edge.Cuts', '#d0d2cd'], ['Margin', '#ff26e2'],
      ['F.Courtyard', '#ff26e2'], ['B.Courtyard', '#26e9ff'], ['F.Fab', '#afafaf'], ['B.Fab', '#585d84'],
      ['User.1', '#c2c2c2'], ['User.2', '#5994dc'], ['User.3', '#b4dbd2'], ['User.4', '#d8c852'],
      ['User.5', '#c2c2c2'], ['User.6', '#5994dc'], ['User.7', '#b4dbd2'], ['User.8', '#d8c852'], ['User.9', '#e8b2a7']
    ];
    const eye = '<svg viewBox="0 0 16 16"><circle cx="8" cy="8" r="8" fill="#545454"/><path d="M2 8c3-5 9-5 12 0-3 5-9 5-12 0z" fill="#fff"/><circle cx="8" cy="8" r="2.500" fill="#fff" stroke="#666"/></svg>';

    document.getElementById('layers').innerHTML = layers.map(([name, color], i) => `
      <div class="layer${i === 0 ? ' current' : ''}">
        <i class="arrow"></i><i class="color" style="background:${color}"></i>
        <button aria-label="Mostrar ${name}">${eye}</button><span>${name}</span>
      </div>`).join('');
  </script>

</body>
</html>
```

FILE: styles.css
```
* {
  box-sizing: border-box;
}

body {
  margin: 0;
  height: 100vh;
  display: flex;
  flex-direction: column;
  overflow: hidden;
  background: #f0f0f0;
  color: #000;
  font: 11px/15px "Open Sans", "Noto Sans", sans-serif;
}

button, select {
  font: inherit;
  color: inherit;
  border: 0;
  padding: 0;
  background: none;
}

/* title and menus */
.titlebar {
  display: flex;
  align-items: center;
  height: 21px;
  background: #fff;
}

.app-icon {
  width: 15px;
  height: 16px;
  margin-right: 5px;
}

.title {
  flex: 1;
}

.win {
  width: 46px;
  height: 20px;
}

.win svg {
  width: 11px;
  height: 11px;
  fill: none;
  stroke: #222;
}

.win:last-child {
  margin-right: 2px;
}

.menubar {
  display: flex;
  gap: 14px;
  height: 19px;
  padding: 0 4px;
  align-items: flex-start;
  background: #fff;
}

.menubar button {
  height: 21px;
}

/* toolbars */
.toolbar {
  display: flex;
  align-items: center;
  height: 39px;
  margin-left: -1px;
}

.tool {
  position: relative;
  flex: none;
  width: 35px;
  height: 33px;
}

.tool svg {
  display: block;
  width: 24px;
  height: 24px;
  margin: auto;
}

.tool.on {
  background: #bfdcf3;
  outline: 1px solid #b0d3ef;
  outline-offset: -1px;
}

.sep {
  flex: none;
  width: 2px;
  height: 31px;
  margin: 0 3px;
  background: #8c8c8c;
  border-right: 1px solid #fff;
}

.net {
  font: bold 9px "Open Sans", sans-serif;
  fill: #fff;
}

.unit {
  font: 600 13px "Open Sans", sans-serif;
  fill: #505050;
  text-anchor: middle;
}

.combo {
  position: relative;
  display: block;
  height: 23px;
  background: #e2e2e2;
  border: 1px solid #adadad;
}

.combo select {
  appearance: none;
  width: 100%;
  height: 100%;
  padding: 0 18px 0 4px;
}

.combo::after {
  content: "";
  position: absolute;
  right: 6px;
  top: 6px;
  width: 6px;
  height: 6px;
  border: solid #666;
  border-width: 0 1px 1px 0;
  transform: rotate(45deg);
  pointer-events: none;
}

.layer-combo {
  display: flex;
  align-items: center;
  width: 136px;
  margin-left: 4px;
  padding-left: 6px;
  background: #fff;
  border-color: #777;
}

.swatch {
  flex: none;
  width: 14px;
  height: 14px;
  background: #c83434;
  border: 1px solid #222;
}

.optionbar {
  display: flex;
  height: 37px;
  background: #dadada;
}

.options {
  display: flex;
  align-items: center;
  padding: 0 4px 0 2px;
  background: #f0f0f0;
}

.track-width {
  width: 210px;
  margin-right: 2px;
}

.via {
  width: 256px;
}

.grid {
  width: 264px;
}

.zoom {
  width: 97px;
}

.options .tool {
  width: 33px;
}

.options .via, .options .grid, .options .zoom {
  margin: 0 1px;
}

/* main area */
main {
  flex: 1;
  display: flex;
  min-height: 0;
}

.sidebar {
  display: flex;
  flex-direction: column;
  align-items: center;
  padding-top: 3px;
  flex: none;
}

.sidebar .tool {
  width: 32px;
  margin: 1px 0;
}

.sidebar .sep {
  width: 29px;
  height: 2px;
  margin: 3px 0;
  border-right: 0;
  border-bottom: 1px solid #fff;
}

.left {
  width: 35px;
  padding-right: 5px;
}

.right {
  width: 42px;
  padding-right: 2px;
  border-right: 2px solid #e6e6e6;
}

.more::after {
  content: "";
  position: absolute;
  right: -2px;
  bottom: 0;
  border: 4px solid #000;
  border-top-color: transparent;
  border-left-color: transparent;
}

.canvas {
  flex: 1;
  min-width: 0;
  background: #001023;
  border-top: 1px solid #7d838a;
}

.canvas svg {
  display: block;
  width: 100%;
  height: 100%;
}

/* board drawing */
.edge {
  fill: none;
  stroke: #c4ced4;
  stroke-width: 4;
}

.copper path {
  fill: none;
  stroke: #c83434;
  stroke-width: 9;
  stroke-linejoin: round;
  stroke-linecap: round;
}

.pad {
  fill: #c83434;
}

.mask {
  fill: none;
  stroke: #8a2450;
  stroke-width: 3;
}

.courtyard {
  fill: none;
  stroke: #c52cc2;
  stroke-width: 4;
}

.silk {
  fill: none;
  stroke: #e8e6b0;
  stroke-width: 3;
}

.fab {
  fill: none;
  stroke: #8796a0;
  stroke-width: 3;
}

.paste {
  fill: #001023;
  stroke: #d99ba2;
  stroke-width: 3;
}

.rats {
  fill: none;
  stroke: #6fb0bb;
  stroke-width: 3;
  opacity: .8;
}

.ref, .value, .fabref, .credits, .module-text {
  font: 36px "DejaVu Sans Mono", "Liberation Mono", monospace;
  text-anchor: middle;
}

.ref {
  font-size: 33px;
  fill: #e8e6b0;
}

.value {
  fill: #9aa5ad;
}

.fabref {
  font-size: 24px;
  fill: #d9a6e6;
}

.credits {
  font-size: 33px;
  fill: #dedcae;
  text-anchor: start;
}

.module-text {
  fill: #d5d9de;
}

.logo {
  font: bold 92px "DejaVu Sans", sans-serif;
  fill: #c83434;
}

/* appearance panel */
.panel {
  display: flex;
  flex-direction: column;
  flex: none;
  width: 180px;
  overflow: hidden;
}

.panel h2 {
  margin: 0;
  height: 20px;
  padding: 0 3px;
  font-size: 11px;
  font-weight: 400;
  line-height: 19px;
  background: #bababa;
}

.tabs {
  display: flex;
  align-items: flex-end;
  height: 28px;
  padding-left: 1px;
}

.tabs button {
  height: 22px;
  padding: 0 6px;
  border: 1px solid #ddd;
  border-left: 0;
}

.tabs .active {
  height: 23px;
  padding: 0 11px 3px 8px;
  background: #fff;
  border-color: #fff;
}

.layers {
  flex: 1;
  min-height: 0;
  overflow: hidden;
  margin-right: 2px;
  border: solid #fff;
  border-width: 1px 2px 0 3px;
}

.layer {
  display: flex;
  align-items: center;
  height: 18px;
  padding-left: 6px;
}

.layer.current {
  background: #e2e2e2;
}

.arrow {
  width: 12px;
  height: 0;
}

.current .arrow {
  width: 5px;
  margin-right: 7px;
  border: solid transparent;
  border-width: 5px 0 5px 5px;
  border-left-color: #3038d8;
  height: 10px;
}

.color {
  width: 14px;
  height: 11px;
}

.layer button {
  width: 16px;
  height: 16px;
  margin: 0 5px 0 6px;
}

.layer svg {
  display: block;
  width: 16px;
  height: 16px;
}

.display-options {
  display: flex;
  align-items: center;
  height: 24px;
  margin: 0 2px 0 1px;
  padding-left: 15px;
  overflow: hidden;
  white-space: nowrap;
  background: #fff;
}

.display-options i {
  flex: none;
  margin-right: 3px;
  border: solid transparent;
  border-width: 4px 0 4px 4px;
  border-left-color: #000;
}

.presets {
  padding: 9px 7px 14px;
}

.presets label {
  display: block;
  height: 17px;
  white-space: nowrap;
}

.presets .combo + label {
  margin-top: 3px;
}

.filter {
  display: grid;
  grid-template-columns: 133px 180px;
  padding: 5px 0 4px 5px;
}

.filter label {
  display: flex;
  align-items: center;
  height: 15px;
  white-space: nowrap;
}

.filter input {
  appearance: none;
  position: relative;
  flex: none;
  width: 13px;
  height: 13px;
  margin: 0 3px 0 0;
  background: #fff;
  border: 1px solid #333;
}

.filter input:checked::after {
  content: "";
  position: absolute;
  left: 4px;
  top: 0;
  width: 4px;
  height: 8px;
  border: solid #333;
  border-width: 0 1px 1px 0;
  transform: rotate(40deg);
}

/* message panel and status bar */
.messages {
  display: grid;
  grid-template-columns: 210px 114px 84px 76px 251px 1fr;
  height: 31px;
  padding: 0 8px;
  white-space: nowrap;
}

.messages p {
  margin: 0;
}

.status {
  display: grid;
  grid-template-columns: 851fr 78fr 160fr 252fr 184fr 79fr 173fr 140fr;
  height: 21px;
  border-top: 1px solid #d4d4d4;
}

.status span {
  padding: 3px 0 0 5px;
  line-height: 15px;
  border-left: 1px solid #d9d9d9;
  white-space: nowrap;
}

.status span:first-child {
  border-left: 0;
}
```
